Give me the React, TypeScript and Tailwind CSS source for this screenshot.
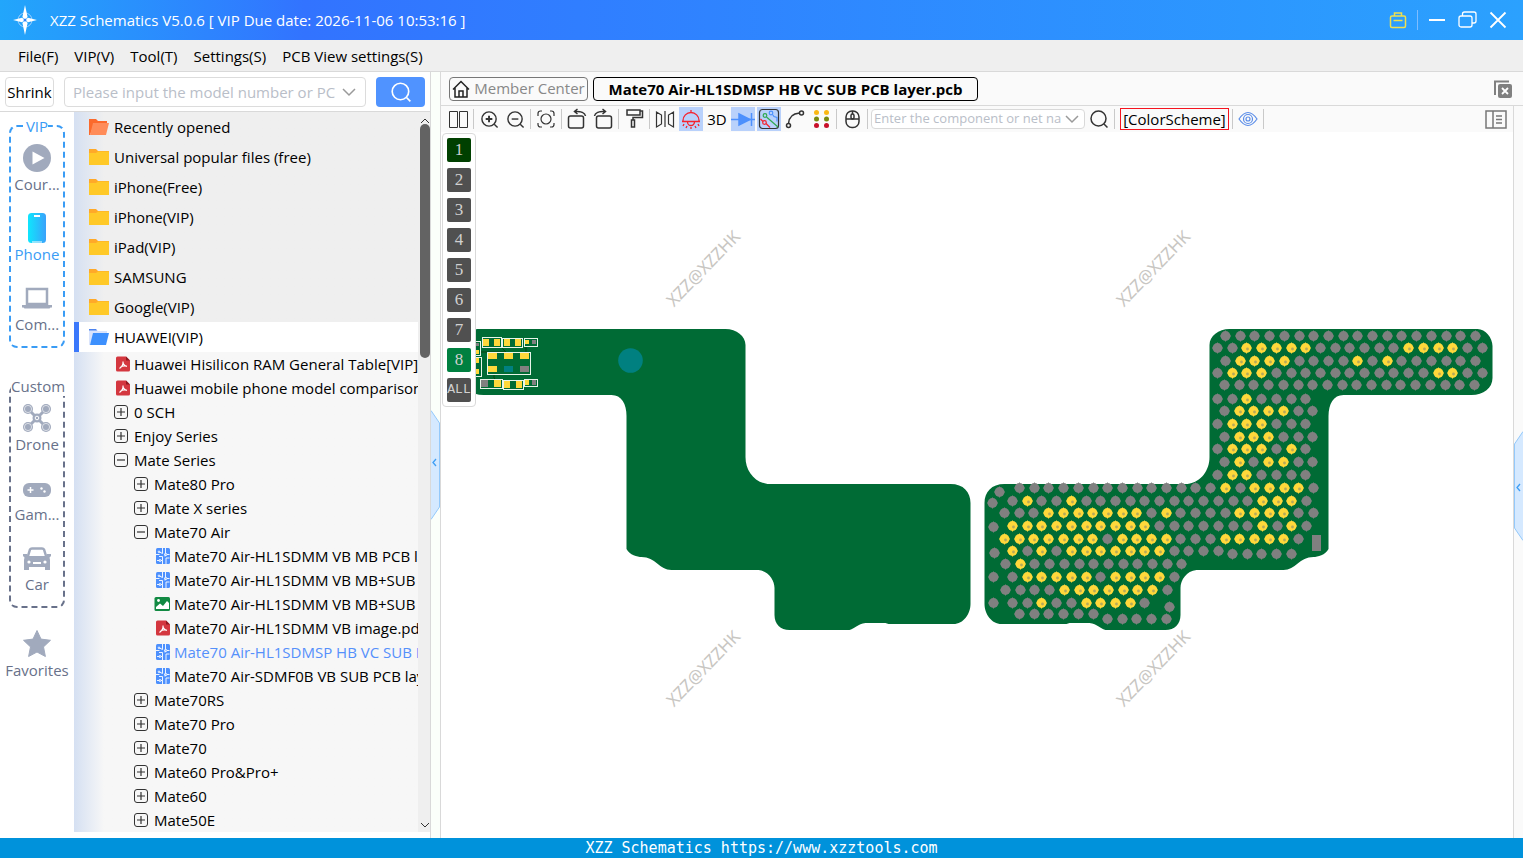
import React, { useState } from "react";

type Pad = { x: number; y: number; gold: boolean };

// One line of pads: start position and a pattern, g = ground (grey), y = signal (yellow)
interface PadRow { x: number; y: number; pads: string; }

const PITCH = 14.7;

const padRows: PadRow[] = [
  { x: 1225, y: 336, pads: "gggggggggggggggggg" },
  { x: 1217, y: 348, pads: "ggyyyyyggggggyyyygg" },
  { x: 1225, y: 361, pads: "gyyyyggggygygggggg" },
  { x: 1217, y: 373, pads: "gyyygggggggggggyygg" },
  { x: 1224, y: 385, pads: "gggggggggggggggggg" },
  { x: 1217, y: 399, pads: "ggygggg" },
  { x: 1224, y: 411, pads: "gyyyygg" },
  { x: 1217, y: 424, pads: "gyyyggg" },
  { x: 1224, y: 437, pads: "gyyyggg" },
  { x: 1217, y: 449, pads: "gyyygyg" },
  { x: 1224, y: 462, pads: "gygyygg" },
  { x: 1217, y: 475, pads: "gyygggg" },
  { x: 1019, y: 488, pads: "ggggggggggggggygyyyyg" },
  { x: 1012, y: 501, pads: "gyggyggggggggggggyyyg" },
  { x: 1004, y: 513, pads: "gggyyyyyyygyggggyyyygg" },
  { x: 1012, y: 526, pads: "yyyyyyyyyygggggggygyg" },
  { x: 1004, y: 539, pads: "yyyyyyygyyyygggyyyyyg" },
  { x: 1012, y: 551, pads: "ygygyyyyyyygggg" },
  { x: 1232, y: 554, pads: "ggggg" },
  { x: 1005, y: 564, pads: "gyggggggggggg" },
  { x: 1012, y: 577, pads: "gyyyyygyyyyg" },
  { x: 1005, y: 590, pads: "ggggyyyyyyyg" },
  { x: 1012, y: 603, pads: "ggyggyyyyg" },
  { x: 1019, y: 614, pads: "gggggg" },
  { x: 1107, y: 619, pads: "ggggg" },
  { x: 999, y: 492, pads: "g" },
  { x: 992, y: 503, pads: "g" },
  { x: 993, y: 527, pads: "g" },
  { x: 994, y: 553, pads: "g" },
  { x: 993, y: 577, pads: "g" },
  { x: 993, y: 603, pads: "g" },
  { x: 1169, y: 607, pads: "g" },
];

const pads: Pad[] = padRows.flatMap((row) =>
  row.pads.split("").map((c, i) => ({ x: Math.round(row.x + i * PITCH), y: row.y, gold: c === "y" }))
);

const outline =
  "M1230 329H1478C1486 329 1493 338 1493 346V378C1493 388 1484 395 1472 395H1344C1334 395 1329 404 1329 416V549C1326 555 1318 557 1314 557C1300 557 1296 570 1284 570H1197C1187 571 1181 580 1181 588V615C1181 624 1175 630 1166 630H1106C1100 628 1098 624 1090 623H1070L1067 624H1002C992 624 985 614 985 604V503C985 492 992 484 1005 484H1188C1202 482 1210 470 1210 457V345C1210 336 1219 329 1230 329Z";

// x, y, width, height
const partBoxes = [
  [482.5, 337.5, 19, 10], [502.5, 338.5, 20, 9], [524.5, 338.5, 13, 8],
  [487.5, 352.5, 43, 22], [480.5, 379.5, 22, 9], [503.5, 380.5, 20, 9],
  [524.5, 379.5, 13, 7], [470.5, 341.5, 10, 14], [470.5, 357.5, 11, 19],
];

const partPads: [number, number, number, number, string][] = [
  [483, 339, 6, 7, "#ffd83b"], [494, 339, 6, 7, "#ffd83b"], [504, 339, 6, 7, "#ffd83b"], [515, 339, 6, 7, "#ffd83b"],
  [525, 340, 4, 4, "#ffd83b"], [532, 340, 4, 4, "#808080"],
  [488, 353, 9, 6, "#ffd83b"], [504, 353, 9, 6, "#ffd83b"], [520, 353, 9, 6, "#ffd83b"],
  [488, 366, 9, 6, "#ffd83b"], [504, 366, 9, 6, "#008080"], [520, 366, 9, 6, "#808080"],
  [481, 380, 7, 7, "#808080"], [494, 380, 7, 7, "#ffd83b"], [504, 381, 6, 7, "#ffd83b"], [516, 381, 6, 7, "#ffd83b"],
  [525, 380, 4, 5, "#ffd83b"], [532, 380, 4, 5, "#808080"],
  [475, 343, 4, 3, "#808080"], [475, 350, 4, 4, "#ffd83b"], [475, 358, 4, 5, "#ffd83b"], [475, 369, 4, 5, "#ffd83b"],
];

const marks = [[703, 268], [1153, 268], [703, 668], [1153, 668]];

function BoardView() {
  return (
    <svg viewBox="441 132 1072 706" className="block h-full w-full" role="img" aria-label="PCB layer view">
      <path d={outline} fill="#006b35" transform="translate(1955.5 0) scale(-1 1)" />
      <path d={outline} fill="#006b35" transform="translate(-0.5 0)" />
      <path d="M481 352h25l-6-6M526 344v8M494 374v4l6 6" fill="none" stroke="#0a4410" />
      {partBoxes.map(([x, y, w, h], i) => (
        <rect key={i} x={x} y={y} width={w} height={h} fill="#006b35" stroke="#e8f5ea" />
      ))}
      {partPads.map(([x, y, w, h, fill], i) => (
        <rect key={i} x={x} y={y} width={w} height={h} fill={fill} />
      ))}
      <circle cx="630.5" cy="360.5" r="12.3" fill="#008080" />
      {pads.map((p, i) => (
        <g key={i} fill={p.gold ? "#ffd83b" : "#808080"}>
          <circle cx={p.x + 0.5} cy={p.y} r="4.9" />
          <path d={`M${p.x - 5} ${p.y}h11M${p.x + 0.5} ${p.y - 5.5}v11`} stroke={p.gold ? "#ffd83b" : "#808080"} />
          {p.gold && <circle cx={p.x + 1.5} cy={p.y + 1} r="1.4" fill="#b5a95a" />}
        </g>
      ))}
      <rect x="1312" y="535" width="9" height="16" fill="#808080" />
      {marks.map(([x, y]) => (
        <text key={`${x}-${y}`} x={x} y={y} transform={`rotate(-46 ${x} ${y})`} textAnchor="middle" dominantBaseline="central" fill="#c8c6c2" fontSize="17" fontFamily="Noto Sans, sans-serif">XZZ@XZZHK</text>
      ))}
    </svg>
  );
}

/* ---------- icons ---------- */

const Logo = () => (
  <svg width="24" height="30" viewBox="0 0 24 30" fill="#fff">
    <circle cx="12" cy="15" r="7" fill="none" stroke="#9fd0ff" strokeWidth="1" />
    <path d="M12 0l2.600 12L12 15 9.400 12zM12 30l2.600-12L12 15l-2.600 3zM0 15l9-2.200L12 15l-3 2.200zM24 15l-9-2.200L12 15l3 2.200z" />
    <circle cx="12" cy="15" r="1.500" fill="#2e86fd" />
  </svg>
);

const Chevron = ({ className }: { className?: string }) => (
  <svg width="14" height="14" viewBox="0 0 14 14" fill="none" stroke="currentColor" strokeWidth="1.500" className={className}>
    <path d="M1 4l6 6 6-6" />
  </svg>
);

const Lens = ({ size = 20, width = 1.5, children }: { size?: number; width?: number; children?: React.ReactNode }) => (
  <svg width={size} height={size} viewBox="0 0 20 20" fill="none" stroke="currentColor" strokeWidth={width}>
    <circle cx="9.500" cy="9.500" r="7.500" />
    <path d="M15 15l3.500 3.500" />
    {children}
  </svg>
);

const Folder = ({ kind }: { kind: "recent" | "closed" | "open" }) => {
  if (kind === "closed") {
    return (
      <svg width="20" height="18" viewBox="0 0 20 18">
        <path d="M0 1h7l2 2h11v5H0z" fill="#ffa928" />
        <path d="M0 5h7l2-1.500h11V17H0z" fill="#ffc928" />
      </svg>
    );
  }
  const back = kind === "recent" ? "#fb6a2c" : "#d9e4fc";
  const front = kind === "recent" ? "#ff8c59" : "#3d90fd";
  return (
    <svg width="20" height="18" viewBox="0 0 20 18">
      <path d="M0 1h7l2 2h9v3H5L1 17H0z" fill={back} />
      {kind === "open" && <path d="M0 1h7l1 1.500H0z" fill="#4c83ee" />}
      <path d="M4 5h16l-3 12H1z" fill={front} />
    </svg>
  );
};

const Toggle = ({ open }: { open: boolean }) => (
  <svg width="16" height="16" viewBox="0 0 16 16" fill="none" stroke="#333" strokeWidth="1">
    <rect x="0.500" y="1.500" width="13" height="13" rx="2.500" />
    <path d={open ? "M3 8h8" : "M3 8h8M7 4v8"} strokeWidth="1.200" />
  </svg>
);

const PdfIcon = () => (
  <svg width="16" height="16" viewBox="0 0 16 16">
    <path d="M3.500 0.500H12l4 4V14a1.500 1.500 0 0 1-1.500 1.500h-11A1.500 1.500 0 0 1 2 14V2A1.500 1.500 0 0 1 3.500 0.500z" fill="#d4373f" />
    <path d="M12 0.500l4 4h-4z" fill="#8e1a20" />
    <path d="M9 5.500c.4 2.500-1.500 5.500-3.500 7M9 5.500c-.3 2.500 1.500 4.500 4 4.800M6.800 10.500c2-.8 4-1 6-.3" fill="none" stroke="#fff" strokeWidth="1.200" />
  </svg>
);

const PcbIcon = () => (
  <svg width="16" height="16" viewBox="0 0 16 16">
    <rect x="2" y="0" width="14" height="16" rx="1.500" fill="#4d90fd" />
    <g fill="none" stroke="#fff" strokeWidth="0.900">
      <path d="M8.500 0v5.500l-3-1.500M11.500 0v5M15.500 6.500h-2.500M2 6.500h3.500M3 12.500h2.500M7 12.500h1.500V8.500H5M8.500 16v-3.500M12 16v-6h3.500M11 5.500v3" />
      <circle cx="5" cy="3.800" r="0.800" />
      <circle cx="11.800" cy="6.500" r="1.100" />
      <circle cx="6" cy="12.500" r="1" />
    </g>
  </svg>
);

const ImageIcon = () => (
  <svg width="16" height="16" viewBox="0 0 16 16">
    <rect x="0.500" y="1" width="15.500" height="14" rx="1.500" fill="#128a43" />
    <path d="M2 13V11l4-3.500 3 2.500 4-5 2 2v6z" fill="#fff" />
    <circle cx="4.500" cy="4.500" r="1.400" fill="#fff" />
  </svg>
);

const navIcons: Record<string, React.ReactNode> = {
  play: (
    <>
      <circle cx="14" cy="14" r="14" />
      <path d="M9.500 7.500L21.500 14 9.500 20.500z" fill="#fff" />
    </>
  ),
  phone: (
    <>
      <defs>
        <linearGradient id="phoneFill" x1="0" x2="1">
          <stop offset="0" stopColor="#0fe6fd" />
          <stop offset="1" stopColor="#3aa2fb" />
        </linearGradient>
      </defs>
      <rect x="5" y="-1" width="18" height="30" rx="3.500" fill="url(#phoneFill)" />
      <path d="M11 2h6" stroke="#fff" strokeWidth="2" />
      <path d="M9 28h10" stroke="#fff" strokeWidth="1" />
    </>
  ),
  laptop: (
    <>
      <path d="M4 5h20v15H4z" fill="none" stroke="currentColor" strokeWidth="2.500" />
      <path d="M-1 21h30v2.500h-1.500l-1 1H1.500l-1-1H-1z" />
    </>
  ),
  drone: (
    <>
      <path d="M5 5l18 18M23 5L5 23" stroke="currentColor" strokeWidth="3" />
      <circle cx="14" cy="14" r="4.500" />
      <circle cx="14" cy="14" r="1.800" fill="none" stroke="#fff" strokeWidth="1" />
      {[[5, 5], [23, 5], [5, 23], [23, 23]].map(([x, y]) => (
        <g key={`${x}${y}`}>
          <circle cx={x} cy={y} r="5" />
          <circle cx={x} cy={y} r="3.600" fill="none" stroke="#fff" strokeWidth="0.600" />
        </g>
      ))}
    </>
  ),
  game: (
    <>
      <rect x="0" y="9" width="28" height="14" rx="6" />
      <path d="M4.500 16h6M7.500 13v6" stroke="#fff" strokeWidth="1.500" />
      <circle cx="18.500" cy="14.500" r="1.200" fill="#fff" />
      <circle cx="21.500" cy="17.500" r="1.200" fill="#fff" />
    </>
  ),
  car: (
    <>
      <path d="M5 12L7 5.500Q7.500 4.500 9 4.500h10q1.500 0 2 1L23 12" fill="none" stroke="currentColor" strokeWidth="2.500" />
      <path d="M0 10h4l1 2h18l1-2h4v2l-1.500 1.500L27 16v10h-5v-3H6v3H1V16l.5-2.500L0 12z" />
      <path d="M10 19h8" stroke="#fff" strokeWidth="2" />
      <circle cx="6" cy="18" r="1.600" fill="#fff" />
      <circle cx="22" cy="18" r="1.600" fill="#fff" />
    </>
  ),
  star: <path d="M14 0.500l4 8.600 9.500 1.200-7 6.600 1.900 9.600L14 22l-8.400 4.500 1.900-9.600-7-6.600L10 9.100z" stroke="currentColor" strokeLinejoin="round" />,
};

/* ---------- sidebar ---------- */

function NavItem({ icon, label, active }: { icon: string; label: string; active?: boolean }) {
  return (
    <button className={`flex h-[70px] w-full flex-col items-center gap-0.5 pt-2 text-[15px] leading-5 ${active ? "text-[#3a9cf5]" : "text-[#68718a]"}`}>
      <svg width="28" height="28" viewBox="0 0 28 28" className="shrink-0 overflow-visible text-[#a1aabd]" fill="currentColor">
        {navIcons[icon]}
      </svg>
      <span>{label}</span>
    </button>
  );
}

const folders = [
  "Recently opened", "Universal popular files (free)", "iPhone(Free)", "iPhone(VIP)",
  "iPad(VIP)", "SAMSUNG", "Google(VIP)", "HUAWEI(VIP)",
];

type NodeKind = "pdf" | "plus" | "minus" | "pcb" | "image";
interface TreeNode { id: number; level: 1 | 2 | 3; kind: NodeKind; label: string; selected?: boolean; }

const nodes: TreeNode[] = [
  { id: 1, level: 1, kind: "pdf", label: "Huawei Hisilicon RAM General Table[VIP]." },
  { id: 2, level: 1, kind: "pdf", label: "Huawei mobile phone model comparison" },
  { id: 3, level: 1, kind: "plus", label: "0 SCH" },
  { id: 4, level: 1, kind: "plus", label: "Enjoy Series" },
  { id: 5, level: 1, kind: "minus", label: "Mate Series" },
  { id: 6, level: 2, kind: "plus", label: "Mate80 Pro" },
  { id: 7, level: 2, kind: "plus", label: "Mate X series" },
  { id: 8, level: 2, kind: "minus", label: "Mate70 Air" },
  { id: 9, level: 3, kind: "pcb", label: "Mate70 Air-HL1SDMM VB MB PCB la" },
  { id: 10, level: 3, kind: "pcb", label: "Mate70 Air-HL1SDMM VB MB+SUB" },
  { id: 11, level: 3, kind: "image", label: "Mate70 Air-HL1SDMM VB MB+SUB" },
  { id: 12, level: 3, kind: "pdf", label: "Mate70 Air-HL1SDMM VB image.pdf" },
  { id: 13, level: 3, kind: "pcb", label: "Mate70 Air-HL1SDMSP HB VC SUB P", selected: true },
  { id: 14, level: 3, kind: "pcb", label: "Mate70 Air-SDMF0B VB SUB PCB lay" },
  { id: 15, level: 2, kind: "plus", label: "Mate70RS" },
  { id: 16, level: 2, kind: "plus", label: "Mate70 Pro" },
  { id: 17, level: 2, kind: "plus", label: "Mate70" },
  { id: 18, level: 2, kind: "plus", label: "Mate60 Pro&Pro+" },
  { id: 19, level: 2, kind: "plus", label: "Mate60" },
  { id: 20, level: 2, kind: "plus", label: "Mate50E" },
];

const indent = { 1: "pl-10", 2: "pl-15", 3: "pl-20" };

const nodeIcon = (kind: NodeKind) => {
  switch (kind) {
    case "pdf": return <PdfIcon />;
    case "pcb": return <PcbIcon />;
    case "image": return <ImageIcon />;
    default: return <Toggle open={kind === "minus"} />;
  }
};

function FileTree() {
  return (
    <div className="flex min-w-0 flex-1 overflow-hidden">
      <div className="min-w-0 flex-1 overflow-hidden bg-[#f7f7f7] bg-linear-to-r from-[#d5e0f2] to-[#f7f7f7] to-[30px]">
        <ul className="bg-linear-to-r from-[#d5e0f2] to-[#efefef] to-[30px]">
          {folders.map((name, i) => {
            const open = name.startsWith("HUAWEI");
            return (
              <li key={name}>
                <button className={`flex h-[30px] w-full items-center gap-[5px] whitespace-nowrap ${open ? "border-l-5 border-[#3b78fb] bg-white pl-[10px]" : "pl-[15px]"}`}>
                  <Folder kind={open ? "open" : i === 0 ? "recent" : "closed"} />
                  {name}
                </button>
              </li>
            );
          })}
        </ul>
        <ul>
          {nodes.map((n) => (
            <li key={n.id}>
              <button className={`flex h-6 w-full items-center gap-1 overflow-hidden whitespace-nowrap ${indent[n.level]} ${n.selected ? "text-[#5590fb]" : ""}`}>
                <span className="shrink-0">{nodeIcon(n.kind)}</span>
                {n.label}
              </button>
            </li>
          ))}
        </ul>
      </div>
      <div className="flex w-3 shrink-0 flex-col items-center bg-[#efefef] pl-px text-[#333]">
        <svg width="10" height="12" viewBox="0 0 10 12" fill="none" stroke="currentColor"><path d="M1 11l4-4 4 4" /></svg>
        <div className="h-[234px] w-[10px] rounded-full bg-[#636363]" />
        <svg width="10" height="12" viewBox="0 0 10 12" fill="none" stroke="currentColor" className="mt-auto"><path d="M1 3l4 4 4-4" /></svg>
      </div>
    </div>
  );
}

const SplitHandle = () => (
  <button aria-label="Collapse panel">
    <svg width="9" height="110" viewBox="0 0 9 110" fill="none">
      <path d="M0 0.500L8.500 13v84L0 109.500" fill="#d5e9ff" stroke="#93c9fb" />
      <path d="M5 49l-3 3.500L5 56" stroke="#3f9ff5" strokeWidth="1.300" />
    </svg>
  </button>
);

/* ---------- toolbar ---------- */

function Tool({ label, active, children }: { label: string; active?: boolean; children: React.ReactNode }) {
  return (
    <button aria-label={label} className={`flex h-6 w-6 shrink-0 items-center justify-center text-[#333] ${active ? "bg-[#b9d1fb]" : ""}`}>
      {children}
    </button>
  );
}

const Sep = () => <div className="mx-px h-5 w-px shrink-0 bg-[#c9c9c9]" />;

const Ico = ({ children, ...rest }: React.SVGProps<SVGSVGElement>) => (
  <svg width="24" height="24" viewBox="0 0 24 24" fill="none" stroke="currentColor" strokeWidth="1.500" {...rest}>{children}</svg>
);

function Toolbar() {
  return (
    <div className="flex h-[26px] items-center gap-0.5 bg-[#fafafa] pl-[5px]">
      <Tool label="Split view"><Ico strokeWidth="1"><path d="M3.500 4.500h8v16h-8zM13.500 4.500h8v16h-8z" /></Ico></Tool>
      <Sep />
      <Tool label="Zoom in"><Lens size={19}><path d="M6 9.500h7M9.500 6v7" strokeWidth="2" /></Lens></Tool>
      <Tool label="Zoom out"><Lens size={19}><path d="M6 9.500h7" /></Lens></Tool>
      <Sep />
      <Tool label="Fit">
        <Ico strokeWidth="1.200">
          <path d="M4 9V6.500A2.500 2.500 0 0 1 6.500 4H8M16 4h1.500A2.500 2.500 0 0 1 20 6.500V9M20 16v1.500a2.500 2.500 0 0 1-2.500 2.500H16M8 20H6.500A2.500 2.500 0 0 1 4 17.500V16" />
          <circle cx="12" cy="12" r="5" />
        </Ico>
      </Tool>
      <Sep />
      <Tool label="Rotate left">
        <Ico><rect x="3.500" y="9" width="15" height="12" rx="2" /><path d="M20.500 9C20 6 16 4 10 4.500M12.500 2l-3 2.500 3 2.500" /></Ico>
      </Tool>
      <Tool label="Rotate right">
        <Ico><rect x="5.500" y="9" width="15" height="12" rx="2" /><path d="M3.500 9C4 6 8 4 14 4.500M11.500 2l3 2.500-3 2.500" /></Ico>
      </Tool>
      <Sep />
      <Tool label="Paint"><Ico><path d="M5 3h13v5H5zM18 4h2.500v6.500H11V13M9.500 13h3v7h-3z" /></Ico></Tool>
      <Sep />
      <Tool label="Mirror"><Ico strokeWidth="1.200"><path d="M3.500 5v15l5-3V8zM12 4v16M20.500 5v15l-5-3V8z" /></Ico></Tool>
      <Tool label="Lamp" active>
        <Ico stroke="#f5222d" strokeWidth="1.300">
          <path d="M12 3v2M4 14.500v-1a8 8 0 0 1 16 0v1M3 14.500h18M8.500 15a3.500 3.500 0 0 0 7 0M5 17l-1 2M8 19l-1 2M12 20v2M16 19l1 2M19 17l1 2" />
        </Ico>
      </Tool>
      <button className="h-6 w-6 shrink-0 text-[15px] leading-6">3D</button>
      <Tool label="Diode" active>
        <Ico stroke="#4d90fd"><path d="M0 12.500h24M20.500 6v13" /><path d="M8 7l11 5.500L8 18z" fill="#4d90fd" /></Ico>
      </Tool>
      <Tool label="Nets" active>
        <Ico strokeWidth="1.200">
          <rect x="2.500" y="2.500" width="19" height="19" rx="3" />
          <path d="M9.500 10L21 20" stroke="#2fa84f" />
          <circle cx="8" cy="8.500" r="1.800" stroke="#2fa84f" />
          <path d="M15.500 7.500l1.500 2 3 1v4" stroke="#4d90fd" />
          <circle cx="14" cy="6" r="1.800" stroke="#4d90fd" />
          <path d="M3.500 12l2.500 2.500" stroke="#f5222d" />
          <circle cx="7.500" cy="15.500" r="1.800" stroke="#f5222d" />
          <path d="M9 16.500l4 4" stroke="#f5222d" />
        </Ico>
      </Tool>
      <Tool label="Curve">
        <Ico><circle cx="5.500" cy="18.500" r="2" /><circle cx="18.500" cy="6" r="2" /><path d="M5.500 16.500C6 10 10 6.500 16.500 6" /></Ico>
      </Tool>
      <Tool label="Pins">
        <Ico stroke="none">
          {["#fbb814", "#7a8b12", "#c8102a"].map((fill, i) => (
            <g key={fill} fill={fill}><circle cx="7.500" cy={5.5 + i * 6.500} r="2.500" /><circle cx="17.500" cy={5.5 + i * 6.500} r="2.500" /></g>
          ))}
        </Ico>
      </Tool>
      <Sep />
      <Tool label="Mouse"><Ico><rect x="6" y="4" width="13" height="16.500" rx="6" /><path d="M6 12h13M12.500 4v3" /><rect x="11" y="7" width="3" height="5" rx="1.500" /></Ico></Tool>
      <Sep />
      <div className="flex h-5 w-[214px] shrink-0 items-center rounded-sm border border-[#d9d9d9] bg-white pr-[5px]">
        <input aria-label="Component or net" placeholder="Enter the component or net name" className="min-w-0 flex-1 pl-0.5 text-[13px] outline-none placeholder:text-[#b9bec8]" />
        <Chevron className="ml-1 shrink-0 text-[#9a9a9a]" />
      </div>
      <Tool label="Find"><Lens size={20} /></Tool>
      <Sep />
      <button className="ml-0.5 h-[22px] w-[109px] shrink-0 border border-[#f5141e] text-[15px] leading-5">[ColorScheme]</button>
      <Sep />
      <Tool label="Preview">
        <Ico stroke="#5b8de8" strokeWidth="1.200"><path d="M3 12q9-13 18 0-9 13-18 0z" /><circle cx="12" cy="12" r="4.500" /><circle cx="12" cy="12" r="2" /></Ico>
      </Tool>
      <Sep />
      <button aria-label="Side panel" className="mr-1.5 ml-auto text-[#777]">
        <svg width="22" height="19" viewBox="0 0 22 19" fill="none" stroke="currentColor" strokeWidth="1.500">
          <path d="M1 1h20v17H1zM8 1v17M11 6h6M11 9.500h6M11 13h6" />
        </svg>
      </button>
    </div>
  );
}

const layers = ["1", "2", "3", "4", "5", "6", "7", "8", "ALL"];

const layerColor = (name: string) => (name === "1" ? "bg-[#004000]" : name === "8" ? "bg-[#008040]" : "bg-[#505050]");

const layerFont = (name: string) =>
  name === "ALL" ? "font-['Liberation_Mono',monospace] text-[13px]" : "font-['Liberation_Serif',serif] text-[17px]";

export default function App() {
  const [model, setModel] = useState("");

  return (
    <div className="flex h-screen flex-col overflow-hidden bg-white font-['Open_Sans',sans-serif] text-[15px] text-black">
      <header className="flex h-10 shrink-0 items-center bg-linear-to-r from-[#22a6fb] via-[#3273ff] via-20% to-[#2ba1fe] pr-4 pl-[13px] text-white">
        <Logo />
        <h1 className="ml-[13px]">XZZ Schematics V5.0.6 [ VIP Due date: 2026-11-06 10:53:16 ]</h1>
        <div className="ml-auto flex items-center">
          <button aria-label="Toolbox">
            <svg width="18" height="18" viewBox="0 0 18 18" fill="none" stroke="#efe04f" strokeWidth="1.500"><rect x="1.500" y="5" width="15" height="11.500" rx="1.500" /><path d="M5.500 5V2h7v3M4.500 9.500h9" /></svg>
          </button>
          <div className="mx-[10px] h-5 w-px bg-[#7fbdff]" />
          <div className="flex gap-3">
            <button aria-label="Minimize"><svg width="18" height="18" viewBox="0 0 18 18" stroke="#fff" strokeWidth="2"><path d="M1 9h16" /></svg></button>
            <button aria-label="Restore"><svg width="19" height="18" viewBox="0 0 19 18" fill="none" stroke="#fff" strokeWidth="1.300"><rect x="1" y="5" width="13" height="11" rx="2" /><path d="M4.500 5V3a2 2 0 0 1 2-2h9.500a2 2 0 0 1 2 2v7a2 2 0 0 1-2 2h-2" /></svg></button>
            <button aria-label="Close"><svg width="18" height="18" viewBox="0 0 18 18" stroke="#fff" strokeWidth="1.800"><path d="M1.500 1.500l15 15M16.500 1.500l-15 15" /></svg></button>
          </div>
        </div>
      </header>

      <nav className="flex h-8 shrink-0 items-center gap-4 border-b border-[#d9d9d9] bg-[#efefef] pt-px pl-[18px]">
        {["File(F)", "VIP(V)", "Tool(T)", "Settings(S)", "PCB View settings(S)"].map((m) => (
          <button key={m}>{m}</button>
        ))}
      </nav>

      <div className="flex min-h-0 flex-1">
        <aside className="flex w-[431px] shrink-0 flex-col border-r border-[#d9d9d9]">
          <div className="flex h-10 shrink-0 items-center border-b border-[#d9d9d9] px-[5px] pt-px">
            <button className="h-[30px] w-[49px] rounded-sm border border-[#dcdcdc] text-center">Shrink</button>
            <div className="ml-[10px] flex h-[30px] min-w-0 flex-1 items-center rounded-sm border border-[#dcdcdc] pr-[9px]">
              <input aria-label="Model number" value={model} onChange={(e) => setModel(e.target.value)} placeholder="Please input the model number or PCB" className="min-w-0 flex-1 pl-2 outline-none placeholder:text-[#b9bec8]" />
              <Chevron className="ml-1.5 shrink-0 text-[#9a9a9a]" />
            </div>
            <button aria-label="Search" className="ml-[10px] flex h-[30px] w-[49px] items-center justify-center rounded-sm bg-[#5093ff] text-white"><Lens size={22} /></button>
          </div>
          <div className="flex min-h-0 flex-1 pb-1.5">
            <div className="w-[74px] shrink-0 overflow-hidden pt-1">
              <fieldset className="mx-[9px] min-w-0 rounded-lg border-2 border-dashed border-[#3a9cf5]">
                <legend className="mx-auto h-5 leading-5 text-[#3a9cf5]">VIP</legend>
                <NavItem icon="play" label="Cour..." />
                <NavItem icon="phone" label="Phone" active />
                <NavItem icon="laptop" label="Com..." />
              </fieldset>
              <fieldset className="mx-[9px] mt-7 min-w-0 rounded-lg border-2 border-dashed border-[#68718a]">
                <legend className="mx-auto h-5 leading-5 text-[#68718a]">Custom</legend>
                <NavItem icon="drone" label="Drone" />
                <NavItem icon="game" label="Gam..." />
                <NavItem icon="car" label="Car" />
              </fieldset>
              <div className="mt-3.5">
                <NavItem icon="star" label="Favorites" />
              </div>
            </div>
            <FileTree />
          </div>
        </aside>

        <div className="flex w-[10px] shrink-0 flex-col justify-center border-r border-[#d9d9d9] bg-[#fbfffa] pt-5">
          <SplitHandle />
        </div>

        <main className="flex min-w-0 flex-1 flex-col">
          <div className="flex h-[34px] shrink-0 items-center gap-[5px] border-b border-[#d9d9d9] bg-[#fafafa] pr-[11px] pl-2">
            <button className="flex h-6 w-[139px] items-center justify-center gap-1 rounded-sm border border-[#777] whitespace-nowrap text-[#888]">
              <svg width="18" height="18" viewBox="0 0 18 18" fill="none" stroke="#222" strokeWidth="1.500"><path d="M1 9.500L9 1.500l8 8M3 8v9h12V8M7 17v-6h4v6" /></svg>
              Member Center
            </button>
            <button className="h-6 w-[385px] rounded-sm border border-black leading-5 font-bold">Mate70 Air-HL1SDMSP HB VC SUB PCB layer.pcb</button>
            <button aria-label="Close all tabs" className="ml-auto">
              <svg width="18" height="18" viewBox="0 0 18 18" fill="none">
                <path d="M1 15V1.500h14" stroke="#808080" strokeWidth="2" />
                <rect x="4" y="4" width="14" height="14" rx="2" fill="#808080" />
                <path d="M8 8l6 6M14 8l-6 6" stroke="#fff" strokeWidth="1.800" />
              </svg>
            </button>
          </div>
          <div className="flex min-h-0 flex-1">
            <section className="flex min-w-0 flex-1 flex-col">
              <Toolbar />
              <div className="relative min-h-0 flex-1">
                <BoardView />
                {/* layer picker floats over the board */}
                <div className="absolute top-px left-px flex w-[34px] flex-col items-center gap-1.5 rounded-sm border border-[#d9d9d9] bg-white py-1">
                  {layers.map((name) => (
                    <button key={name} className={`flex h-6 w-6 items-center justify-center rounded-xs text-[#d0d0d0] ${layerFont(name)} ${layerColor(name)}`}>{name}</button>
                  ))}
                </div>
              </div>
            </section>
            <div className="flex w-[10px] shrink-0 flex-col justify-center border-l border-[#d9d9d9] bg-[#fafafa] pt-7">
              <button aria-label="Expand panel">
                <svg width="9" height="110" viewBox="0 0 9 110" fill="none">
                  <path d="M9 0.500L0.500 13v84L9 109.500" fill="#d5e9ff" stroke="#93c9fb" />
                  <path d="M6 53l-3 3.500L6 60" stroke="#3f9ff5" strokeWidth="1.300" />
                </svg>
              </button>
            </div>
          </div>
        </main>
      </div>

      <footer className="h-5 shrink-0 bg-[#0092db] text-center font-['DejaVu_Sans_Mono',monospace] text-[15px] leading-5 text-white">
        XZZ Schematics https://www.xzztools.com
      </footer>
    </div>
  );
}
